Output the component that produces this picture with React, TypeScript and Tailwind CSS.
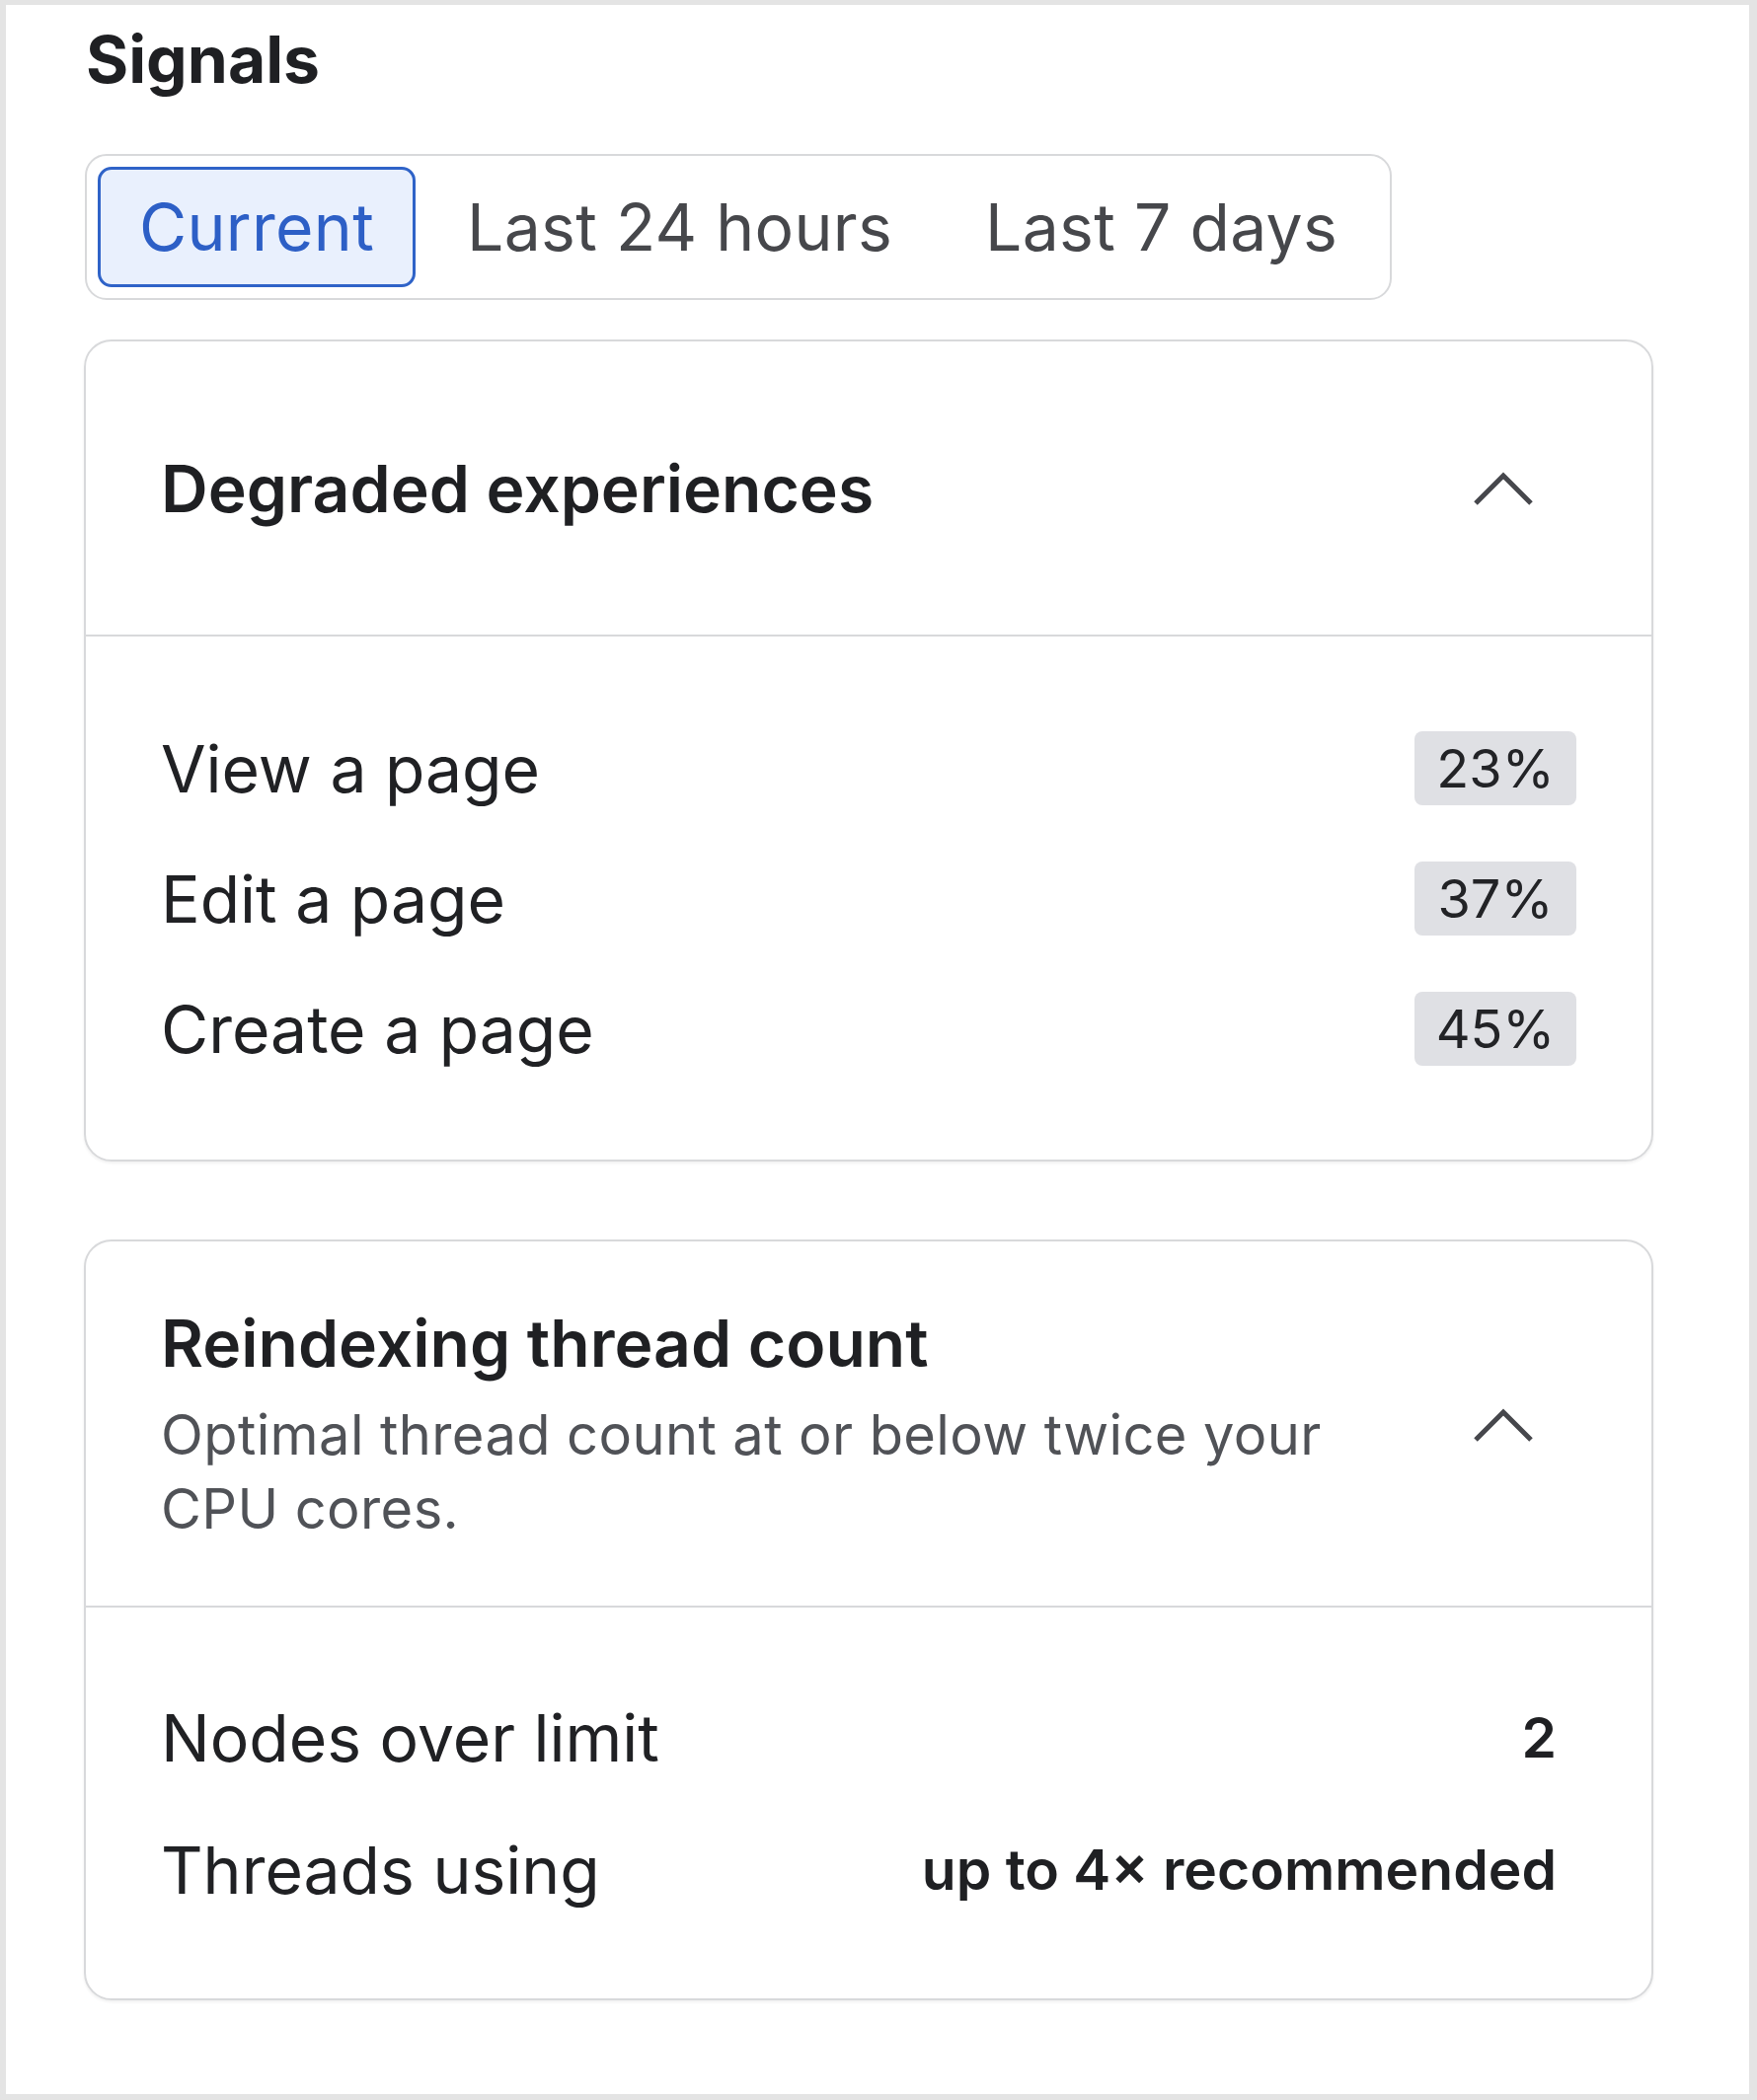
import { useState } from 'react';

const tabs = ['Current', 'Last 24 hours', 'Last 7 days'];

const experiences = [
    { label: 'View a page', value: '23%' },
    { label: 'Edit a page', value: '37%' },
    { label: 'Create a page', value: '45%' },
];

const threadStats = [
    { label: 'Nodes over limit', value: '2' },
    { label: 'Threads using', value: 'up to 4× recommended' },
];

function ChevronUp() {
    return (
        <svg width="64" height="38" viewBox="0 0 64 38" fill="none" className="shrink-0">
            <path d="M4 34 L32 6 L60 34" stroke="#46474c" strokeWidth="5" />
        </svg>
    );
}

export default function App() {
    const [active, setActive] = useState('Current');

    return (
        <div
            className="flex h-[2128px] w-full bg-[#e4e4e4] pt-[5px] pl-[6px] pr-[8px] pb-[6px]"
            style={{ fontFamily: 'Inter, "Noto Sans", sans-serif' }}
        >
            <div className="flex-1 bg-white pl-[79px] pt-[13px]">
                <div className="w-[1590px]">
                    <h1 className="pl-[2px] text-[66px] leading-[84px] font-bold text-[#1f2023]">Signals</h1>

                    {/* time range switcher */}
                    <div className="mt-[54px] ml-[1px] inline-flex gap-[10px] rounded-[22px] border-2 border-[#d8d9db] p-[11px]">
                        {tabs.map((tab) => (
                            <button
                                key={tab}
                                onClick={() => setActive(tab)}
                                className={`h-[122px] rounded-[14px] border-[3px] px-[39px] text-[66px] leading-none tracking-[0.3px] ${
                                    active === tab
                                        ? 'border-[#2f63c8] bg-[#e9f0fd] text-[#2d5fc6]'
                                        : 'border-transparent text-[#46474b]'
                                }`}
                            >
                                {tab}
                            </button>
                        ))}
                    </div>

                    {/* degraded experiences */}
                    <div className="mt-[40px] rounded-[28px] border-2 border-[#d8d9db] shadow-[0_2px_3px_rgba(0,0,0,0.06)]">
                        <div className="flex items-center justify-between border-b-2 border-[#d8d9db] px-[76px] pt-[109px] pb-[108px]">
                            <h2 className="text-[66px] leading-[80px] font-semibold text-[#1f2023]">Degraded experiences</h2>
                            <div className="mr-[42px]">
                                <ChevronUp />
                            </div>
                        </div>
                        <div className="flex flex-col gap-[57px] px-[76px] pt-[96px] pb-[95px]">
                            {experiences.map((row) => (
                                <div key={row.label} className="flex h-[75px] items-center justify-between">
                                    <span className="text-[66px] leading-[80px] text-[#202124]">{row.label}</span>
                                    <span className="flex h-[75px] w-[164px] items-center justify-center rounded-[8px] bg-[#dfe0e4] text-[54px] text-[#222326]">
                                        {row.value}
                                    </span>
                                </div>
                            ))}
                        </div>
                    </div>

                    {/* reindexing thread count */}
                    <div className="mt-[79px] rounded-[28px] border-2 border-[#d8d9db] shadow-[0_2px_3px_rgba(0,0,0,0.06)]">
                        <div className="flex items-center border-b-2 border-[#d8d9db] px-[76px] pt-[63px] pb-[60px]">
                            <div className="min-w-0 flex-1">
                                <h2 className="text-[66px] leading-[80px] font-semibold text-[#1f2023]">Reindexing thread count</h2>
                                <p className="mt-[16px] text-[56px] leading-[75px] tracking-[0.4px] text-[#505257]">
                                    Optimal thread count at or below twice your CPU cores.
                                </p>
                            </div>
                            <div className="ml-[60px] mr-[42px]">
                                <ChevronUp />
                            </div>
                        </div>
                        <div className="flex flex-col gap-[54px] px-[76px] pt-[92px] pb-[90px]">
                            {threadStats.map((row) => (
                                <div key={row.label} className="flex items-center justify-between">
                                    <span className="text-[66px] leading-[80px] text-[#202124]">{row.label}</span>
                                    <span className="pr-[20px] text-[57px] leading-[80px] font-semibold text-[#1f2023]">{row.value}</span>
                                </div>
                            ))}
                        </div>
                    </div>
                </div>
            </div>
        </div>
    );
}
